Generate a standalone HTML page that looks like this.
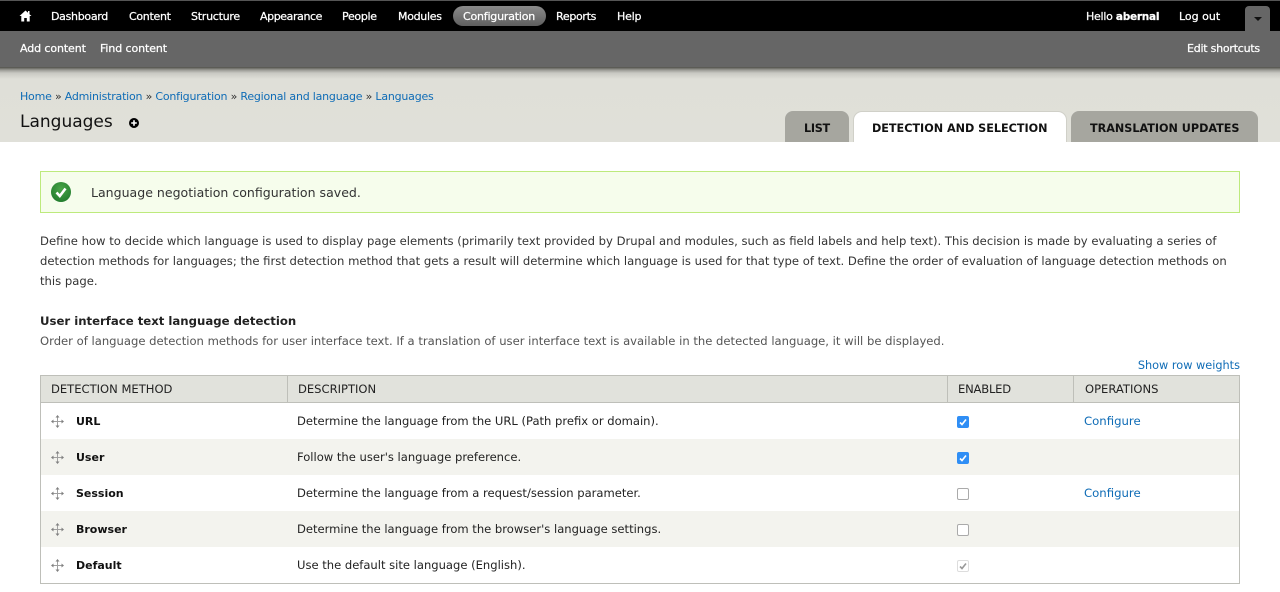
<!DOCTYPE html>
<html lang="en"><head><meta charset="utf-8"><title>Languages</title>
<style>
html,body{margin:0;padding:0;background:#fff}
body{width:1280px;height:592px;overflow:hidden;position:relative;font-family:"DejaVu Sans","Liberation Sans",sans-serif;font-size:12px;color:#333}
.a{position:absolute;white-space:nowrap;line-height:16px}
a{color:#0f6cb6;text-decoration:none}
.w{color:#fff;font-size:11px;-webkit-text-stroke:.25px #fff;letter-spacing:-.2px}
.bar{position:absolute;left:0;width:1280px}
.row{position:absolute;left:41px;width:1198px;height:36px}
.alt{background:#f3f3ee}
.cb{position:absolute;left:957px;width:10px;height:10px;border:1px solid #aaa;border-radius:2px;background:#fff}
.on{background:#2f8ef5;border-color:#2f8ef5}
.b{font-weight:bold;color:#111;font-size:11px}
.d{color:#222;font-size:11.56px}
.h{color:#222;font-size:11.55px}
.tab{position:absolute;top:111px;height:31px;border-radius:8px 8px 0 0;background:#a6a69f}
.t{font-size:11.2px;color:#111;font-weight:bold}
</style></head><body>
<div class="bar" style="top:0;height:31px;background:#000;border-top:1px solid #555;box-sizing:border-box"></div>
<div class="bar" style="top:31px;height:36px;background:#666"></div>
<div class="bar" style="top:67px;height:75px;background:linear-gradient(#4f4f4a 0,#9a9a94 3px,#c8c8c2 6px,#dfdfd8 12px,#e0e0d9 100%)"></div>

<svg class="a" style="left:19px;top:10px" width="13" height="12" viewBox="0 0 13 12"><path fill="#fff" d="M6.5 0.5L0.5 6H2.3V11.5H5.2V8H7.8V11.5H10.7V6H12.5L10.5 4.2V1H9V2.8Z"/></svg>
<div class="a" style="left:453px;top:6px;width:93px;height:20px;border-radius:10px;background:linear-gradient(#8a8a8a,#5f5f5f)"></div>
<span class="a w" style="left:51px;top:9px;letter-spacing:-.3px">Dashboard</span>
<span class="a w" style="left:129px;top:9px;letter-spacing:-.3px">Content</span>
<span class="a w" style="left:191px;top:9px;letter-spacing:-.25px">Structure</span>
<span class="a w" style="left:260px;top:9px;letter-spacing:-.4px">Appearance</span>
<span class="a w" style="left:342px;top:9px;letter-spacing:-.3px">People</span>
<span class="a w" style="left:398px;top:9px;letter-spacing:-.3px">Modules</span>
<span class="a w" style="left:463px;top:9px;letter-spacing:-.2px">Configuration</span>
<span class="a w" style="left:556px;top:9px;letter-spacing:-.3px">Reports</span>
<span class="a w" style="left:617px;top:9px;letter-spacing:-.2px">Help</span>
<span class="a w" style="left:1086px;top:9px;letter-spacing:-.25px">Hello <b style="font-size:10.5px">abernal</b></span>
<span class="a w" style="left:1179px;top:9px;letter-spacing:0">Log out</span>
<div class="a" style="left:1245px;top:6px;width:25px;height:25px;background:#666;border-radius:4px 4px 0 0"></div>
<div class="a" style="left:1254px;top:17px;width:0;height:0;border:4px solid transparent;border-top:4px solid #111;border-bottom:0"></div>
<span class="a w" style="left:20px;top:41px;letter-spacing:-.1px">Add content</span>
<span class="a w" style="left:100px;top:41px;letter-spacing:-.1px">Find content</span>
<span class="a w" style="left:1187px;top:41px;letter-spacing:-.23px">Edit shortcuts</span>

<div class="a" style="left:20px;top:89px;font-size:11px;letter-spacing:-.21px"><a>Home</a> » <a>Administration</a> » <a>Configuration</a> » <a>Regional and language</a> » <a>Languages</a></div>
<div class="a" style="left:20px;top:111px;font-size:17px;line-height:22px;color:#111">Languages</div>
<svg class="a" style="left:129px;top:118px" width="10" height="10" viewBox="0 0 10 10"><circle cx="5" cy="5" r="5" fill="#000"/><path d="M5 2.2V7.8M2.2 5H7.8" stroke="#fff" stroke-width="1.6"/></svg>

<div class="tab" style="left:785px;width:64px"></div>
<span class="a t" style="left:804px;top:121px;letter-spacing:-.3px">LIST</span>
<div class="tab" style="left:854px;width:212px;top:112px;height:30px;background:#fff;box-shadow:0 0 0 1px #d0d0c8"></div>
<div class="a" style="left:852px;top:142px;width:216px;height:2px;background:#fff"></div>
<span class="a t" style="left:872px;top:121px">DETECTION AND SELECTION</span>
<div class="tab" style="left:1071px;width:187px"></div>
<span class="a t" style="left:1090px;top:121px">TRANSLATION UPDATES</span>

<div class="a" style="left:40px;top:171px;width:1198px;height:40px;background:#f6fdec;border:1px solid #bdea7c"></div>
<svg class="a" style="left:51px;top:182px" width="20" height="20" viewBox="0 0 20 20"><defs><radialGradient id="g" cx=".5" cy=".35" r=".7"><stop offset="0" stop-color="#4aa548"/><stop offset="1" stop-color="#1f7a2c"/></radialGradient></defs><circle cx="10" cy="10" r="10" fill="url(#g)"/><path d="M5.5 10.5L8.8 14L14.5 6.5" fill="none" stroke="#fff" stroke-width="2.6"/></svg>
<span class="a" style="left:91px;top:185px;color:#333;font-size:12.55px">Language negotiation configuration saved.</span>

<div class="a" style="left:40px;top:231px;font-size:11.61px;line-height:20px;color:#333">Define how to decide which language is used to display page elements (primarily text provided by Drupal and modules, such as field labels and help text). This decision is made by evaluating a series of<br>detection methods for languages; the first detection method that gets a result will determine which language is used for that type of text. Define the order of evaluation of language detection methods on<br>this page.</div>
<div class="a" style="left:40px;top:313px;font-weight:bold;color:#222;font-size:11.7px">User interface text language detection</div>
<div class="a" style="left:40px;top:333px;color:#555;font-size:11.6px">Order of language detection methods for user interface text. If a translation of user interface text is available in the detected language, it will be displayed.</div>
<a class="a" style="right:40px;top:358px;font-size:11.3px">Show row weights</a>

<div class="a" style="left:40px;top:375px;width:1198px;height:207px;border:1px solid #bebfb9"></div>
<div class="a" style="left:41px;top:376px;width:1198px;height:26px;background:#e1e2dc;border-bottom:1px solid #bebfb9"></div>
<div class="a" style="left:287px;top:376px;width:1px;height:26px;background:#bebfb9"></div>
<div class="a" style="left:947px;top:376px;width:1px;height:26px;background:#bebfb9"></div>
<div class="a" style="left:1073px;top:376px;width:1px;height:26px;background:#bebfb9"></div>
<span class="a h" style="left:51px;top:381px">DETECTION METHOD</span>
<span class="a h" style="left:298px;top:381px">DESCRIPTION</span>
<span class="a h" style="left:958px;top:381px;letter-spacing:-.2px">ENABLED</span>
<span class="a h" style="left:1085px;top:381px">OPERATIONS</span>

<div class="row alt" style="top:439px"></div>
<div class="row alt" style="top:511px"></div>

<svg width="0" height="0" style="position:absolute"><defs><g id="drag"><path d="M6.5 1.5V11.5M1.5 6.5H11.5" stroke="#a0a0a0" stroke-width="1" fill="none"/><path d="M6.5 0L4.5 2.5H8.5ZM6.5 13L4.5 10.5H8.5ZM0 6.5L2.5 4.5V8.5ZM13 6.5L10.5 4.5V8.5Z" fill="#808080"/></g></defs></svg>
<svg class="a" style="left:51px;top:415px" width="13" height="13"><use href="#drag"/></svg>
<svg class="a" style="left:51px;top:451px" width="13" height="13"><use href="#drag"/></svg>
<svg class="a" style="left:51px;top:487px" width="13" height="13"><use href="#drag"/></svg>
<svg class="a" style="left:51px;top:523px" width="13" height="13"><use href="#drag"/></svg>
<svg class="a" style="left:51px;top:559px" width="13" height="13"><use href="#drag"/></svg>

<span class="a b" style="left:76px;top:414px">URL</span>
<span class="a b" style="left:76px;top:450px">User</span>
<span class="a b" style="left:76px;top:486px">Session</span>
<span class="a b" style="left:76px;top:522px">Browser</span>
<span class="a b" style="left:76px;top:558px">Default</span>

<span class="a d" style="left:297px;top:413px">Determine the language from the URL (Path prefix or domain).</span>
<span class="a d" style="left:297px;top:449px">Follow the user's language preference.</span>
<span class="a d" style="left:297px;top:485px">Determine the language from a request/session parameter.</span>
<span class="a d" style="left:297px;top:521px">Determine the language from the browser's language settings.</span>
<span class="a d" style="left:297px;top:557px">Use the default site language (English).</span>

<div class="cb on" style="top:416px"></div>
<svg class="a" style="left:957px;top:416px" width="12" height="12"><path d="M3 6.5L5 8.5L9 3.5" fill="none" stroke="#fff" stroke-width="1.6"/></svg>
<div class="cb on" style="top:452px"></div>
<svg class="a" style="left:957px;top:452px" width="12" height="12"><path d="M3 6.5L5 8.5L9 3.5" fill="none" stroke="#fff" stroke-width="1.6"/></svg>
<div class="cb" style="top:488px"></div>
<div class="cb" style="top:524px"></div>
<div class="cb" style="top:560px;border-color:#ddd"></div>
<svg class="a" style="left:957px;top:560px" width="12" height="12"><path d="M3 6.5L5 8.5L9 3.5" fill="none" stroke="#999" stroke-width="1.6"/></svg>

<a class="a" style="left:1084px;top:413px;font-size:11.7px">Configure</a>
<a class="a" style="left:1084px;top:485px;font-size:11.7px">Configure</a>
</body></html>
